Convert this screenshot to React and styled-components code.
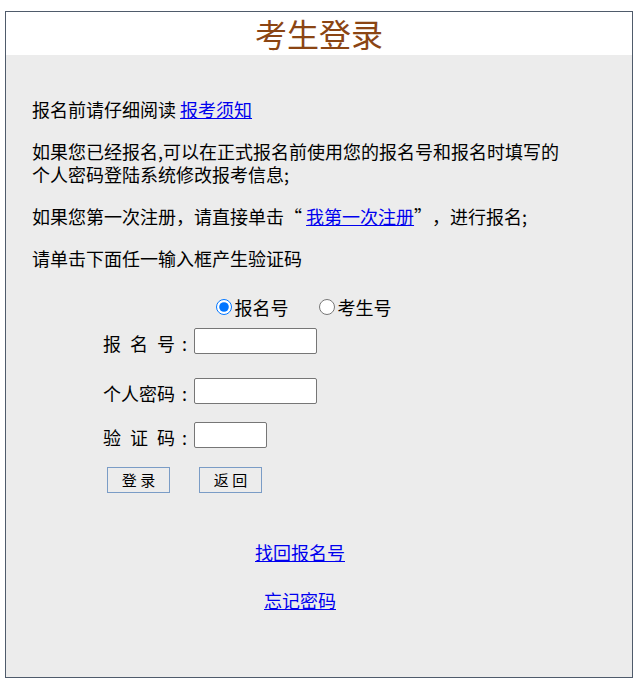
import React from 'react'
import styled, { createGlobalStyle } from 'styled-components'

const GlobalStyle = createGlobalStyle`
  body {
    margin: 0;
    background: #fff;
    color: #000;
    font-family: "Noto Sans CJK SC", "Noto Sans", sans-serif;
  }
`

const Frame = styled.div`
  box-sizing: border-box;
  width: 628px;
  height: 667px;
  margin: 11px auto 0;
  border: 1px solid #4f5b6b;
  background: #ececec;
`

const TitleBar = styled.h1`
  margin: 0;
  height: 43px;
  background: #fff;
  color: #8b4513;
  font-size: 32px;
  font-weight: normal;
  line-height: 43px;
  text-align: center;
`

const Content = styled.div`
  width: 536px;
  padding: 24px 0 0 26px;
`

const Notice = styled.p`
  margin: 19px 0;
  font-size: 18px;
  line-height: 23px;
`

// full-width quote cell, glyph pushed to the side next to the quoted text
const Quote = styled.span`
  display: inline-block;
  width: 18px;
  text-align: ${(p) => (p.$open ? 'right' : 'left')};
`

const Link = styled.a`
  color: #0000ee;
  text-decoration: underline;
  cursor: pointer;
`

const Form = styled.form`
  padding-top: 6px;
  margin: 0;
`

const RadioRow = styled.div`
  display: flex;
  justify-content: center;
  align-items: center;
  gap: 30px;
  height: 24px;
  padding-left: 7px;
`

const RadioOption = styled.label`
  display: inline-flex;
  align-items: center;
  gap: 3px;
  font-size: 18px;
  line-height: 24px;
`

const Radio = styled.input`
  width: 16px;
  height: 16px;
  margin: 0;
  accent-color: #0075ff;
`

const FieldRow = styled.div`
  display: flex;
  align-items: flex-end;
  padding-left: 71px;
  margin-top: ${(p) => p.$gap}px;
`

const FieldLabel = styled.span`
  display: inline-flex;
  justify-content: space-between;
  width: 72px;
  font-size: 18px;
  line-height: 20px;
  position: relative;
  top: -1px;
`

const Colon = styled.span`
  display: inline-block;
  width: 19px;
  text-align: center;
  font-size: 18px;
  line-height: 20px;
  position: relative;
  top: -1px;
`

const TextInput = styled.input`
  box-sizing: border-box;
  width: ${(p) => p.$width}px;
  height: 26px;
  margin: 0;
  padding: 0 3px;
  border: 1px solid #767676;
  border-radius: 2px;
  background: #fff;
`

const ButtonRow = styled.div`
  display: flex;
  gap: 29px;
  padding-left: 75px;
  margin-top: 19px;
`

const Button = styled.button`
  box-sizing: border-box;
  width: 63px;
  height: 26px;
  padding: 0;
  border: 1px solid #7a9cc6;
  background: #ececec;
  color: #000;
  font-family: "Noto Sans CJK SC", "Noto Sans", sans-serif;
  font-size: 15px;
  line-height: 24px;
`

const LinkLine = styled.div`
  margin-top: ${(p) => p.$gap}px;
  font-size: 18px;
  line-height: 23px;
  text-align: center;
`

const Label = ({ chars }) => (
  <>
    <FieldLabel>
      {chars.split('').map((c, i) => (
        <span key={i}>{c}</span>
      ))}
    </FieldLabel>
    <Colon>:</Colon>
  </>
)

const App = () => {
  const [kind, setKind] = React.useState('bmh')
  return (
    <>
      <GlobalStyle />
      <Frame>
        <TitleBar>考生登录</TitleBar>
        <Content>
          <Notice>
            报名前请仔细阅读 <Link>报考须知</Link>
          </Notice>
          <Notice>
            如果您已经报名,可以在正式报名前使用您的报名号和报名时填写的个人密码登陆系统修改报考信息;
          </Notice>
          <Notice>
            如果您第一次注册，请直接单击<Quote $open>“</Quote> <Link>我第一次注册</Link>
            <Quote>”</Quote>，进行报名;
          </Notice>
          <Notice>请单击下面任一输入框产生验证码</Notice>
          <Form onSubmit={(e) => e.preventDefault()}>
            <RadioRow>
              <RadioOption>
                <Radio
                  type="radio"
                  name="kind"
                  checked={kind === 'bmh'}
                  onChange={() => setKind('bmh')}
                />
                报名号
              </RadioOption>
              <RadioOption>
                <Radio
                  type="radio"
                  name="kind"
                  checked={kind === 'ksh'}
                  onChange={() => setKind('ksh')}
                />
                考生号
              </RadioOption>
            </RadioRow>
            <FieldRow $gap={9}>
              <Label chars="报名号" />
              <TextInput type="text" $width={123} />
            </FieldRow>
            <FieldRow $gap={24}>
              <Label chars="个人密码" />
              <TextInput type="password" $width={123} />
            </FieldRow>
            <FieldRow $gap={18}>
              <Label chars="验证码" />
              <TextInput type="text" $width={73} />
            </FieldRow>
            <ButtonRow>
              <Button type="submit">登 录</Button>
              <Button type="button">返 回</Button>
            </ButtonRow>
          </Form>
          <LinkLine $gap={48}>
            <Link>找回报名号</Link>
          </LinkLine>
          <LinkLine $gap={25}>
            <Link>忘记密码</Link>
          </LinkLine>
        </Content>
      </Frame>
    </>
  )
}

export default App
